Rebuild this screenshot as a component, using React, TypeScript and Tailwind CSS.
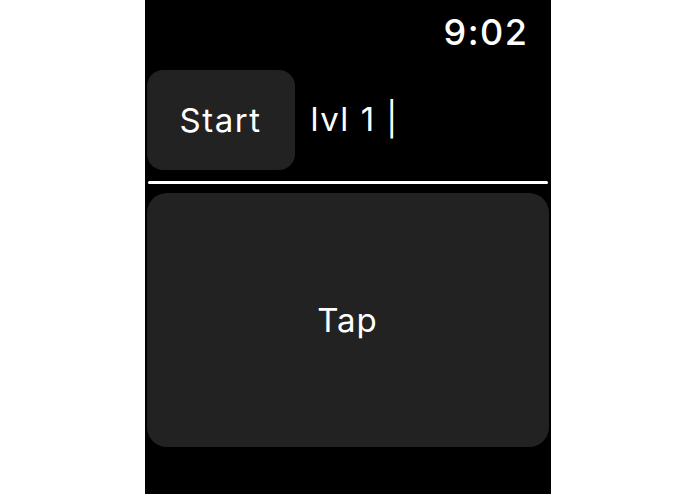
export default function App() {
  return (
    <div
      className="flex h-[494px] w-full justify-center bg-white"
      style={{ fontFamily: 'Inter, "Liberation Sans", sans-serif' }}
    >
      <div className="flex w-[406px] flex-col bg-black">
        <div className="flex h-[70px] items-start justify-end pr-[22px] pt-[14px]">
          <span className="text-[36px] font-medium leading-none tracking-[1.5px] text-white">9:02</span>
        </div>

        <div className="flex h-[100px] items-center">
          <button className="ml-[2px] flex h-[100px] w-[148px] items-center justify-center rounded-[16px] bg-[#222222] pt-[2px] text-[33px] tracking-[1.5px] text-white">
            Start
          </button>
          <span className="ml-[16px] text-[33px] tracking-[1.5px] text-white">lvl 1 |</span>
        </div>

        <div className="mx-[3px] mt-[11px] h-[3px] rounded-full bg-white" />

        <button className="mx-[2px] mt-[9px] flex h-[254px] items-center justify-center rounded-[20px] bg-[#222222] pt-[2px] text-[33px] tracking-[1px] text-white">
          Tap
        </button>
      </div>
    </div>
  );
}
